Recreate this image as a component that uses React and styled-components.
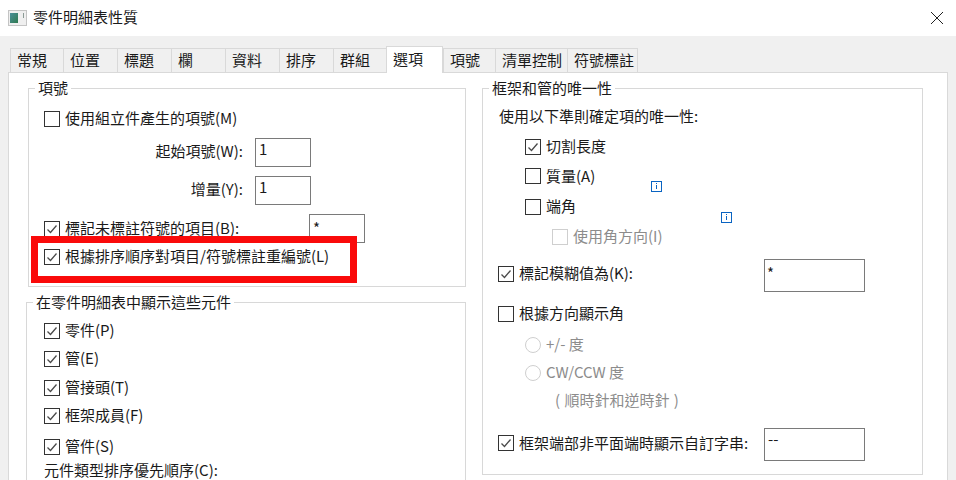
import React from "react";
import styled, { createGlobalStyle } from "styled-components";

const Global = createGlobalStyle`
  html, body { margin: 0; padding: 0; background: #fff; overflow: hidden; }
  * { box-sizing: border-box; }
`;
const Page = styled.div`
  width: 956px; height: 480px; overflow: hidden; background: #f0f0f0; color: #1a1a1a;
  font-family: "Noto Sans CJK TC", "Open Sans", sans-serif; font-size: 15px; line-height: 20px;
  display: flex; flex-direction: column;
`;
const TitleBar = styled.header`
  height: 36px; background: #fff; display: flex; align-items: center; padding: 0 12px 1px 8px; gap: 6px; flex: none;
`;
const Title = styled.span`flex: 1; font-size: 15px; margin-bottom: 1px;`;
const TabStrip = styled.nav`
  height: 37px; flex: none; display: flex; align-items: flex-end; padding: 0 0 0 10px; position: relative; z-index: 1; margin-bottom: -1px;
`;
const Tab = styled.div`
  width: ${p => p.$w}px; height: ${p => (p.$active ? 27 : 25)}px; padding: ${p => (p.$active ? "0 0 3px 6px" : "0 0 1px 6px")};
  display: flex; align-items: center; background: ${p => (p.$active ? "#fff" : "#f0f0f0")};
  border: 1px solid #d9d9d9; border-right-width: ${p => (p.$active ? 1 : 0)}px;
  border-bottom: ${p => (p.$active ? "none" : "1px solid #d9d9d9")};
  &:last-child { border-right-width: 1px; }
`;
const Panel = styled.main`
  position: relative; flex: 1; width: 940px; margin-left: 8px; background: #fff;
  border: 1px solid #d9d9d9; border-bottom: none; display: flex;
`;
const Column = styled.div`
  width: ${p => p.$w}px; padding: 15px 0 0 ${p => p.$pl}px; flex: none;
`;
const Group = styled.section`
  border: 1px solid #d8d8d8; width: ${p => p.$w}px; height: ${p => p.$h}px;
  margin: ${p => p.$mt || 0}px 0 0 ${p => p.$ml || 0}px;
`;
const Legend = styled.h3`
  margin: -11px 0 0 ${p => p.$ml || 6}px; padding: 0 3px; width: fit-content; height: 20px;
  background: #fff; font: inherit;
`;
const Row = styled.div`
  display: flex; align-items: center; gap: ${p => p.$gap ?? 5}px; height: ${p => p.$h || 28}px;
  margin-top: ${p => p.$mt || 0}px; padding: 0 ${p => p.$pr || 0}px ${p => p.$pb || 0}px ${p => p.$pl || 0}px;
  justify-content: ${p => (p.$end ? "flex-end" : "flex-start")};
  color: ${p => (p.$off ? "#8c8c8c" : "inherit")};
`;
const Label = styled.span`
  margin-bottom: ${p => p.$lift ?? 2}px; word-spacing: ${p => (p.$wide ? 1 : 0)}px;
`;
const Box = styled.span`
  width: 16px; height: 16px; flex: none; border: 1px solid ${p => (p.$off ? "#cfcfcf" : "#333")}; background: #fff;
  display: inline-flex; align-items: center; justify-content: center;
`;
const Radio = styled.span`
  width: 16px; height: 16px; flex: none; border: 1px solid #cfcfcf; border-radius: 50%; background: #fff;
`;
const Input = styled.div`
  width: ${p => p.$w}px; height: ${p => p.$h}px; flex: none; border: 1px solid #7a7a7a; background: #fff;
  padding: ${p => p.$pt || 0}px 0 0 ${p => p.$pli ?? 3}px; margin-left: ${p => (p.$auto ? "auto" : "0")}; align-self: flex-start;
`;
const Info = styled.span`
  position: absolute; left: ${p => p.$x}px; top: ${p => p.$y}px; width: 11px; height: 11px;
  border: 1px solid #0a64c2; background: #fff; display: flex; align-items: center; justify-content: center;
`;
const Highlight = styled.div`
  position: absolute; left: 22px; top: 163px; width: 326px; height: 47px; border: 7px solid #fa0a0a; pointer-events: none;
`;
const CloseBtn = styled.svg`width: 14px; height: 14px; flex: none;`;

const Check = () => (
  <svg width="12" height="12" viewBox="0 0 12 12"><path d="M1.5 6.5 L4.5 9.5 L10.5 2.5" fill="none" stroke="#4a4a4a" strokeWidth="1.3" /></svg>
);
const CB = ({ on, off }) => <Box $off={off}>{on && <Check />}</Box>;
const InfoMark = () => (
  <svg width="9" height="9" viewBox="0 0 9 9"><rect x="4" y="1" width="1" height="1" fill="#0a64c2" /><rect x="4" y="3" width="1" height="4" fill="#0a64c2" /></svg>
);
const AppIcon = () => (
  <svg width="19" height="16" viewBox="0 0 19 16">
    <defs><linearGradient id="g" x1="0" y1="0" x2="1" y2="1"><stop offset="0" stopColor="#4a8f9a" /><stop offset="1" stopColor="#2f7a4f" /></linearGradient></defs>
    <rect x="0.5" y="0.5" width="18" height="15" fill="#efefef" stroke="#c4c4c4" />
    <rect x="2" y="3" width="8" height="10" fill="url(#g)" />
    <rect x="15" y="3" width="1" height="5" fill="#8a9a94" />
  </svg>
);

const tabs = [["常規",53],["位置",54],["標題",54],["欄",54],["資料",54],["排序",54],["群組",53],["選項",57],["項號",52],["清單控制",72],["符號標註",71]];

export default function App() {
  return (
    <Page>
      <Global />
      <TitleBar>
        <AppIcon />
        <Title>零件明細表性質</Title>
        <CloseBtn viewBox="0 0 14 14"><path d="M1 1 L13 13 M13 1 L1 13" stroke="#222" strokeWidth="1" fill="none" /></CloseBtn>
      </TitleBar>
      <TabStrip>
        {tabs.map(([t, w]) => <Tab key={t} $w={w} $active={t === "選項"}>{t}</Tab>)}
      </TabStrip>
      <Panel>
        <Column $w={473} $pl={17}>
          <Group $w={438} $h={199} $ml={2}>
            <Legend>項號</Legend>
            <Row $mt={7} $pl={15}><CB /><Label>使用組立件產生的項號(M)</Label></Row>
            <Row $mt={5} $h={29} $end $pr={154} $gap={12}><Label $lift={3}>起始項號(W):</Label><Input $w={56} $h={29}>1</Input></Row>
            <Row $mt={9} $h={29} $end $pr={154} $gap={12}><Label $lift={3}>增量(Y):</Label><Input $w={56} $h={29}>1</Input></Row>
            <Row $mt={9} $h={29} $pl={15} $pr={100}><CB on /><Label $lift={1}>標記未標註符號的項目(B):</Label><Input $w={56} $h={29} $auto $pt={3}>*</Input></Row>
            <Row $pl={15}><CB on /><Label>根據排序順序對項目/符號標註重編號(L)</Label></Row>
          </Group>
          <Group $w={440} $h={220} $mt={15}>
            <Legend>在零件明細表中顯示這些元件</Legend>
            <Row $mt={5} $pl={17}><CB on /><Label>零件(P)</Label></Row>
            <Row $pl={17}><CB on /><Label>管(E)</Label></Row>
            <Row $mt={1} $pl={17}><CB on /><Label>管接頭(T)</Label></Row>
            <Row $pl={17}><CB on /><Label>框架成員(F)</Label></Row>
            <Row $mt={3} $pl={17}><CB on /><Label>管件(S)</Label></Row>
            <Row $h={20} $pl={17}><Label>元件類型排序優先順序(C):</Label></Row>
          </Group>
        </Column>
        <Column $w={450} $pl={0}>
          <Group $w={441} $h={387}>
            <Legend>框架和管的唯一性</Legend>
            <Row $mt={5} $pl={16}><Label>使用以下準則確定項的唯一性:</Label></Row>
            <Row $mt={2} $pl={42}><CB on /><Label>切割長度</Label></Row>
            <Row $mt={1} $pl={42}><CB /><Label $lift={1}>質量(A)</Label></Row>
            <Row $mt={3} $pl={42}><CB /><Label>端角</Label></Row>
            <Row $mt={2} $pl={69} $off><CB off /><Label>使用角方向(I)</Label></Row>
            <Row $mt={8} $h={33} $pb={3} $pl={15} $pr={57}><CB on /><Label>標記模糊值為(K):</Label><Input $w={101} $h={33} $auto $pt={3} $pli={2}>*</Input></Row>
            <Row $mt={8} $pl={15}><CB /><Label>根據方向顯示角</Label></Row>
            <Row $mt={3} $pl={42} $off><Radio /><Label>+/- 度</Label></Row>
            <Row $pl={42} $off><Radio /><Label>CW/CCW 度</Label></Row>
            <Row $h={27} $pl={72} $off><Label $wide>( 順時針和逆時針 )</Label></Row>
            <Row $mt={14} $h={33} $pb={3} $pl={15} $pr={57}><CB on /><Label $lift={1}>框架端部非平面端時顯示自訂字串:</Label><Input $w={101} $h={33} $auto>--</Input></Row>
          </Group>
        </Column>
        <Info $x={642} $y={108}><InfoMark /></Info>
        <Info $x={712} $y={139}><InfoMark /></Info>
        <Highlight />
      </Panel>
    </Page>
  );
}
